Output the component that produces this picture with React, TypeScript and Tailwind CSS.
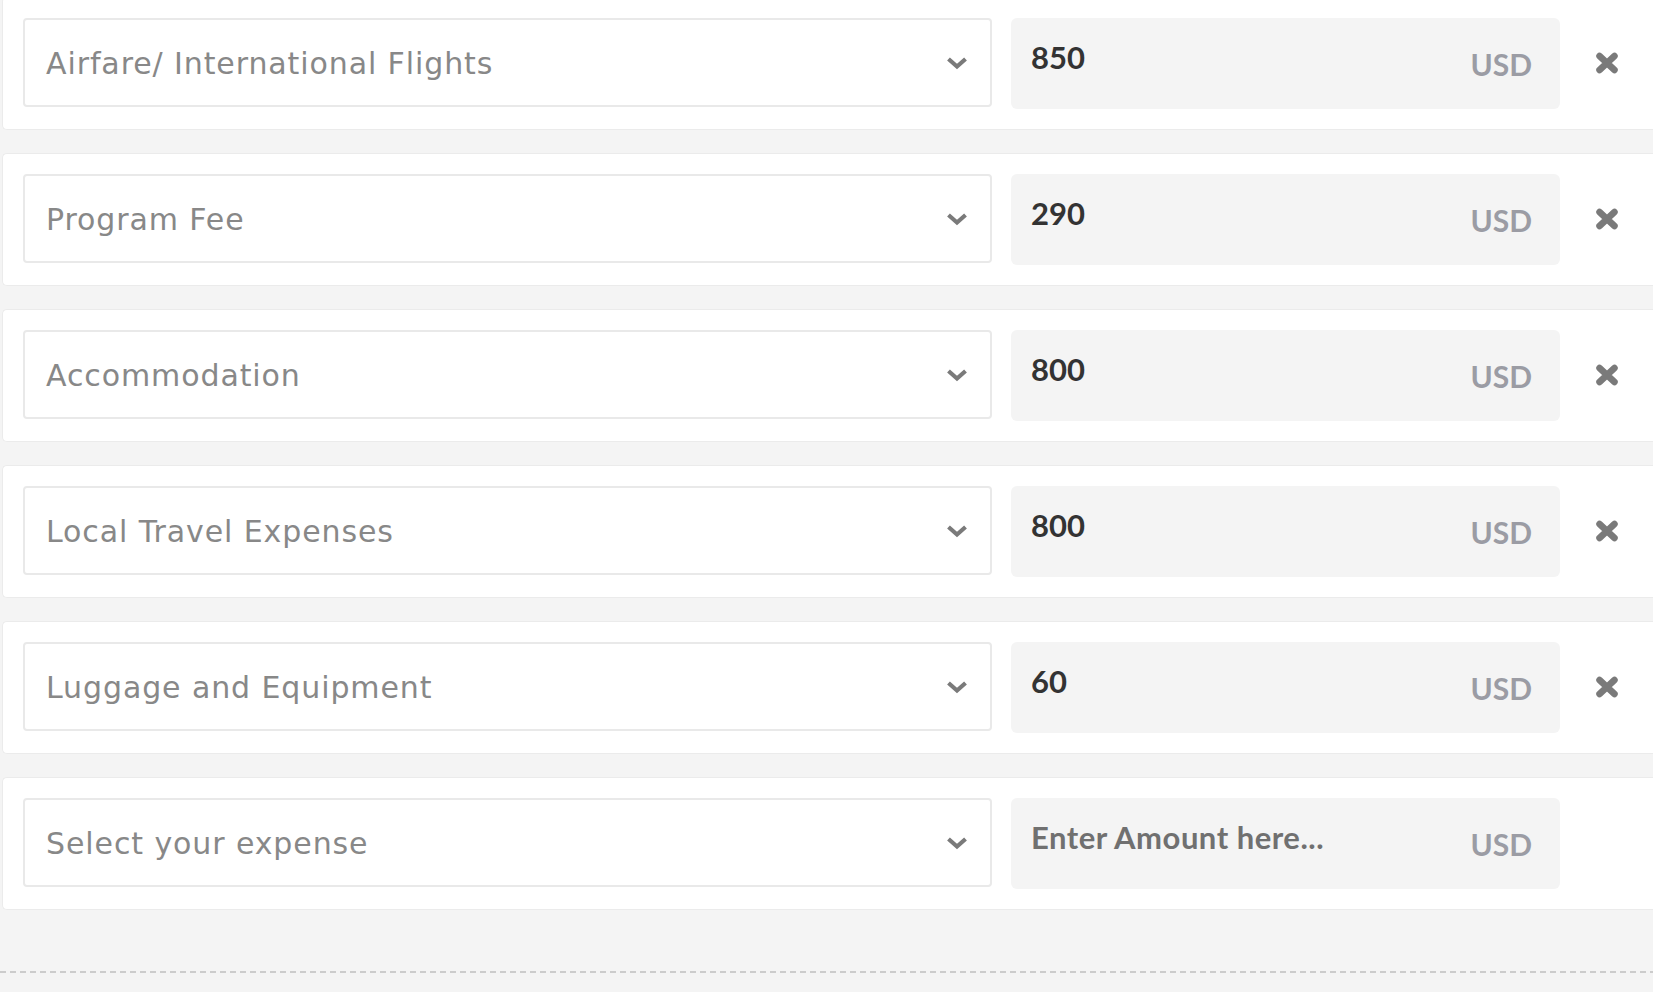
import React from "react";

type Row = { label: string; amount?: string };

const rows: Row[] = [
  { label: "Airfare/ International Flights", amount: "850" },
  { label: "Program Fee", amount: "290" },
  { label: "Accommodation", amount: "800" },
  { label: "Local Travel Expenses", amount: "800" },
  { label: "Luggage and Equipment", amount: "60" },
  { label: "Select your expense" },
];

function Chevron() {
  return (
    <svg width="24" height="16" viewBox="0 0 24 16" className="shrink-0">
      <path d="M3.5 4 L12 11.5 L20.5 4" fill="none" stroke="#7a7a7a" strokeWidth="4.2" strokeLinecap="butt" strokeLinejoin="miter" />
    </svg>
  );
}

function Times() {
  return (
    <svg width="26" height="24" viewBox="0 0 26 24">
      <path d="M5.5 5 L20.5 19 M20.5 5 L5.5 19" fill="none" stroke="#7a7a7a" strokeWidth="6.5" strokeLinecap="round" />
    </svg>
  );
}

export default function App() {
  return (
    <div className="h-[992px] w-full overflow-hidden bg-[#f4f4f4]">
      <div className="-mt-[3px] flex flex-col gap-[23px] pl-[2px]">
        {rows.map((r, i) => (
          <div
            key={i}
            className="flex items-start rounded-l-[5px] border border-r-0 border-[#ebebeb] bg-white py-[20px] pl-[20px]"
          >
            <div className="flex h-[89px] w-[969px] shrink-0 items-center justify-between rounded-[4px] border-2 border-[#e9e9e9] bg-white pl-[21px] pr-[21px]">
              <span className="pt-[2px] font-['DejaVu_Sans',sans-serif] text-[30px] tracking-[0.9px] text-[#888888]">
                {r.label}
              </span>
              <Chevron />
            </div>
            <div className="ml-[19px] flex h-[91px] w-[549px] shrink-0 rounded-[6px] bg-[#f4f4f4] pl-[20px] pr-[28px] font-['Lato',sans-serif] font-bold">
              <div
                className={
                  "flex-1 pt-[24px] text-[31px] leading-none " +
                  (r.amount ? "text-[#333333]" : "tracking-[0.5px] text-[#707070]")
                }
              >
                {r.amount ?? "Enter Amount here..."}
              </div>
              <div className="pt-[31px] text-[30px] leading-none text-[#9b9ca4]">USD</div>
            </div>
            {r.amount ? (
              <div className="flex h-[89px] w-[94px] shrink-0 items-center justify-center">
                <Times />
              </div>
            ) : null}
          </div>
        ))}
      </div>
      <div className="mt-[61px] h-[2px] w-full bg-[linear-gradient(to_right,#cccccc_6px,transparent_6px)] bg-[length:10px_2px]" />
    </div>
  );
}
